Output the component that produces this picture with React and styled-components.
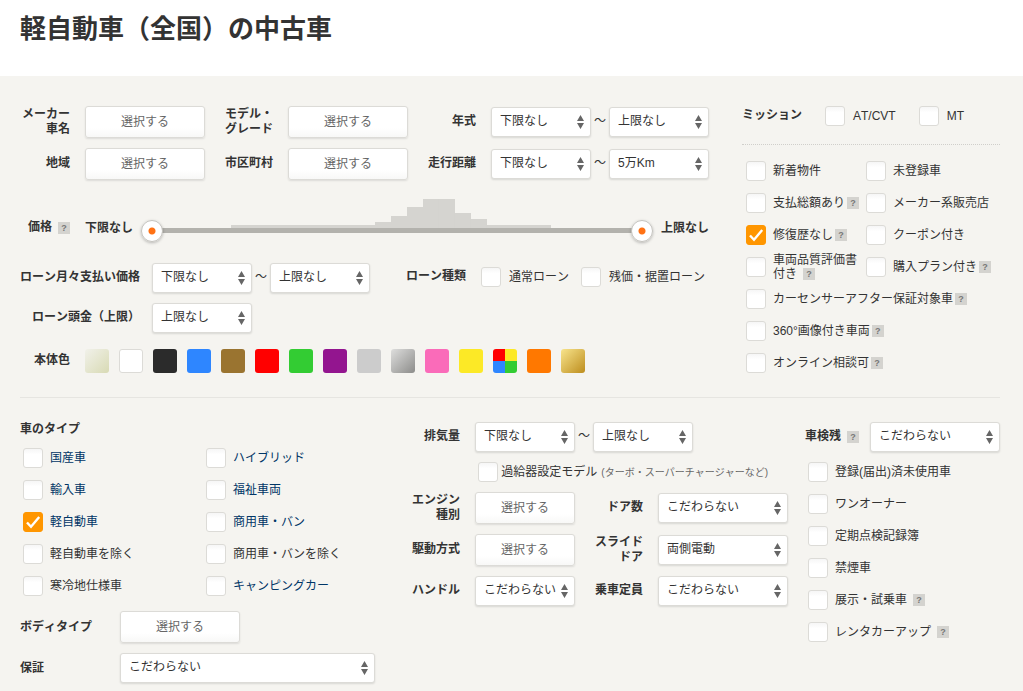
import React from 'react'
import styled, { createGlobalStyle } from 'styled-components'

const App = () => (
  <>
    <GlobalStyle />
    <Header>
      <Title>軽自動車（全国）の中古車</Title>
    </Header>
    <Panel>
      <TopSection>
        <div>
          <BasicGrid>
            <Label htmlFor='maker'>メーカー<br />車名</Label>
            <Button id='maker' type='button'>選択する</Button>
            <Label htmlFor='model'>モデル・<br />グレード</Label>
            <Button id='model' type='button'>選択する</Button>
            <Label htmlFor='year'>年式</Label>
            <Range id='year' name='年式' from='下限なし' to='上限なし' />
            <Label htmlFor='area'>地域</Label>
            <Button id='area' type='button'>選択する</Button>
            <Label htmlFor='city'>市区町村</Label>
            <Button id='city' type='button'>選択する</Button>
            <Label htmlFor='mileage'>走行距離</Label>
            <Range id='mileage' name='走行距離' from='下限なし' to='5万Km' />
          </BasicGrid>
          <PriceSlider />
          <LoanGrid>
            <Label htmlFor='loan'>ローン月々支払い価格</Label>
            <Range id='loan' name='ローン月々支払い価格' from='下限なし' to='上限なし' />
            <LoanTypes>
              <Label as='span'>ローン種類</Label>
              <Check gap='8px' text='通常ローン' />
              <Check gap='8px' text='残価・据置ローン' />
            </LoanTypes>
            <Label htmlFor='deposit'>ローン頭金（上限）</Label>
            <Select id='deposit' width='100px' value='上限なし' />
          </LoanGrid>
          <ColorRow>
            <Label as='span'>本体色</Label>
            <Swatches>
              {colors.map(c => (
                <Swatch key={c.name} type='checkbox' aria-label={c.name} $fill={c.fill} $outlined={c.outlined} />
              ))}
            </Swatches>
          </ColorRow>
        </div>
        <div>
          <Mission>
            <Label as='span'>ミッション</Label>
            <Check gap='8px' text='AT/CVT' />
            <Check gap='8px' text='MT' />
          </Mission>
          <OptionGrid>
            {options.map(o => <Check key={o.text} {...o} />)}
          </OptionGrid>
        </div>
      </TopSection>

      <BottomSection>
        <div>
          <Heading>車のタイプ</Heading>
          <TypeGrid>
            {carTypes.map(t => <Check key={t.text} {...t} />)}
          </TypeGrid>
          <BodyGrid>
            <Label $left htmlFor='body'>ボディタイプ</Label>
            <Button id='body' type='button'>選択する</Button>
            <Label $left htmlFor='warranty'>保証</Label>
            <Select id='warranty' width='100%' value='こだわらない' />
          </BodyGrid>
        </div>
        <div>
          <SpecGrid>
            <Label htmlFor='engine-size'>排気量</Label>
            <Wide>
              <Range id='engine-size' name='排気量' from='下限なし' to='上限なし' />
            </Wide>
          </SpecGrid>
          <TurboRow>
            <Check gap='3px' text='過給器設定モデル' note='(ターボ・スーパーチャージャーなど)' />
          </TurboRow>
          <SpecGrid>
            <Label htmlFor='engine'>エンジン<br />種別</Label>
            <Button id='engine' type='button'>選択する</Button>
            <Label htmlFor='doors'>ドア数</Label>
            <Select id='doors' width='100%' value='こだわらない' />
            <Label htmlFor='drive'>駆動方式</Label>
            <Button id='drive' type='button'>選択する</Button>
            <Label htmlFor='slide'>スライド<br />ドア</Label>
            <Select id='slide' width='100%' value='両側電動' />
            <Label htmlFor='handle'>ハンドル</Label>
            <Select id='handle' width='100%' value='こだわらない' />
            <Label htmlFor='seats'>乗車定員</Label>
            <Select id='seats' width='100%' value='こだわらない' />
          </SpecGrid>
        </div>
        <div>
          <Inspection>
            <Label htmlFor='inspection'>車検残</Label>
            <Help />
            <Select id='inspection' width='130px' value='こだわらない' />
          </Inspection>
          <ConditionList>
            {conditions.map(c => <Check key={c.text} {...c} />)}
          </ConditionList>
        </div>
      </BottomSection>
    </Panel>
  </>
)

const options = [
  { text: '新着物件' },
  { text: '未登録車' },
  { text: '支払総額あり', help: true },
  { text: 'メーカー系販売店' },
  { text: '修復歴なし', help: true, checked: true },
  { text: 'クーポン付き' },
  { text: '車両品質評価書付き', help: true, spaced: true },
  { text: '購入プラン付き', help: true },
  { text: 'カーセンサーアフター保証対象車', help: true, full: true },
  { text: '360°画像付き車両', help: true, full: true },
  { text: 'オンライン相談可', help: true, full: true }
]

const carTypes = [
  { text: '国産車', href: '#domestic' },
  { text: 'ハイブリッド', href: '#hybrid' },
  { text: '輸入車', href: '#import' },
  { text: '福祉車両', href: '#welfare' },
  { text: '軽自動車', href: '#kei', checked: true },
  { text: '商用車・バン', href: '#van' },
  { text: '軽自動車を除く' },
  { text: '商用車・バンを除く' },
  { text: '寒冷地仕様車' },
  { text: 'キャンピングカー', href: '#camper' }
]

const conditions = [
  { text: '登録(届出)済未使用車' },
  { text: 'ワンオーナー' },
  { text: '定期点検記録簿' },
  { text: '禁煙車' },
  { text: '展示・試乗車', help: true, spaced: true },
  { text: 'レンタカーアップ', help: true, spaced: true }
]

const colors = [
  { name: 'パール', fill: 'linear-gradient(135deg, #f1f1ea, #d8dab4)' },
  { name: 'ホワイト', fill: '#fff', outlined: true },
  { name: 'ブラック', fill: '#2b2b2b' },
  { name: 'ブルー', fill: '#2e86ff' },
  { name: 'ブラウン', fill: '#9a7430' },
  { name: 'レッド', fill: '#ff0000' },
  { name: 'グリーン', fill: '#33cc33' },
  { name: 'パープル', fill: '#93158f' },
  { name: 'シルバー', fill: '#ccc' },
  { name: 'ガンメタ', fill: 'linear-gradient(135deg, #dededd, #8c8c8a)' },
  { name: 'ピンク', fill: '#fa6bb9' },
  { name: 'イエロー', fill: '#fce926' },
  { name: 'その他', fill: 'conic-gradient(#fce926 25%, #33cc33 0 50%, #2e86ff 0 75%, #ff0000 0)' },
  { name: 'オレンジ', fill: '#ff7800' },
  { name: 'ゴールド', fill: 'linear-gradient(135deg, #f8e48c, #bd8d1d)' }
]

// number of cars per price band, first band is the cheapest
const bands = [0, 0, 0, 0, 0, 3, 3, 3, 3, 3, 3, 3, 3, 3, 6, 12, 21, 29, 29, 15, 9, 3, 3, 3, 3, 0, 0, 0, 0, 0, 0]

const Help = () => <HelpButton type='button' aria-label='ヘルプ'>?</HelpButton>

const Check = ({ text, note, href, help, spaced, checked, full, gap = '7px' }) => (
  <CheckItem $full={full}>
    <CheckLabel $gap={gap}>
      <Box>
        <BoxInput type='checkbox' defaultChecked={checked} />
        <Tick viewBox='0 0 20 20'>
          <path d='M4 10.5 L8 14.8 L16.2 5' />
        </Tick>
      </Box>
      <CheckText>
        {href ? <TypeLink href={href}>{text}</TypeLink> : text}
        {note && <Note>{note}</Note>}
        {help && <HelpSlot $spaced={spaced}><Help /></HelpSlot>}
      </CheckText>
    </CheckLabel>
  </CheckItem>
)

const Select = ({ id, name, value, width }) => (
  <SelectWrap $width={width}>
    <SelectInput id={id} aria-label={name} defaultValue={value}>
      <option>{value}</option>
    </SelectInput>
    <Arrows viewBox='0 0 7 14'>
      <path d='M3.5 0 L7 6 H0 Z M0 8 H7 L3.5 14 Z' />
    </Arrows>
  </SelectWrap>
)

const Range = ({ id, name, from, to }) => (
  <RangeRow>
    <Select id={id} width='100px' value={from} />
    <Tilde>～</Tilde>
    <Select name={`${name} 上限`} width='100px' value={to} />
  </RangeRow>
)

const PriceSlider = () => (
  <PriceRow>
    <PriceLabel>
      <Label as='span'>価格</Label>
      <Help />
    </PriceLabel>
    <Bound>下限なし</Bound>
    <Slider>
      <Histogram viewBox='0 0 496 29' preserveAspectRatio='none'>
        {bands.map((h, i) => h > 0 && <rect key={i} x={i * 16} y={29 - h} width='16' height={h} />)}
      </Histogram>
      <Track />
      <Thumb type='range' aria-label='価格 下限' min='0' max='100' defaultValue='0' />
      <Thumb type='range' aria-label='価格 上限' min='0' max='100' defaultValue='100' />
    </Slider>
    <Bound>上限なし</Bound>
  </PriceRow>
)

const GlobalStyle = createGlobalStyle`
  * {
    box-sizing: border-box;
  }
  body {
    margin: 0;
    background: #fff;
    color: #333;
    font-family: "Liberation Sans", "Noto Sans CJK JP", sans-serif;
    font-size: 12px;
    font-kerning: none;
    line-height: 15px;
  }
  button, input, select {
    margin: 0;
    font: inherit;
  }
`
const Header = styled.header`
  padding: 11px 20px 29px;
`
const Title = styled.h1`
  margin: 0;
  font-size: 26px;
  line-height: 36px;
`
const Panel = styled.main`
  padding: 30px 23px 8px 20px;
  background: #f5f4f0;
`
const TopSection = styled.section`
  display: grid;
  grid-template-columns: 1fr 258px;
  gap: 33px;
  padding-bottom: 18px;
  border-bottom: 1px solid #e6e5e1;
`
const BottomSection = styled.section`
  display: grid;
  grid-template-columns: 355px 1fr 195px;
  gap: 17px;
  padding-top: 24px;
`
const Label = styled.label`
  padding-bottom: ${props => props.$left ? '0' : '1px'};
  font-weight: bold;
  text-align: ${props => props.$left ? 'left' : 'right'};
  white-space: nowrap;
`
const BasicGrid = styled.div`
  display: grid;
  grid-template-columns: 50px 120px 53px 120px 1fr 218px;
  gap: 10px 15px;
  align-items: center;
`
const Button = styled.button`
  height: 32px;
  padding: 0;
  border: 1px solid #dcdbd7;
  border-radius: 3px;
  background: linear-gradient(#fff 70%, #f8f8f7);
  box-shadow: 0 1px 2px rgba(0, 0, 0, 0.1);
  color: #666;
  cursor: pointer;
`
const RangeRow = styled.div`
  display: flex;
  align-items: center;
`
const Tilde = styled.span`
  width: 18px;
  padding-bottom: 1px;
  text-align: center;
`
const SelectWrap = styled.span`
  display: grid;
  align-items: center;
  width: ${props => props.$width};
`
const SelectInput = styled.select`
  grid-area: 1 / 1;
  width: 100%;
  height: 30px;
  padding: 0 16px 1px 8px;
  appearance: none;
  border: 1px solid #dcdbd7;
  border-radius: 3px;
  background: #fff;
  box-shadow: 0 1px 2px rgba(0, 0, 0, 0.12);
  color: #333;
`
const Arrows = styled.svg`
  grid-area: 1 / 1;
  justify-self: end;
  width: 7px;
  height: 14px;
  margin-right: 7px;
  fill: #666;
  pointer-events: none;
`
const HelpButton = styled.button`
  width: 12px;
  height: 12px;
  padding: 0;
  border: 0;
  background: #d4d3cf;
  color: #777;
  font-size: 9px;
  font-weight: bold;
  line-height: 12px;
  vertical-align: 1px;
`
const HelpSlot = styled.span`
  margin-left: ${props => props.$spaced ? '6px' : '2px'};
`
const PriceRow = styled.div`
  display: flex;
  align-items: center;
  gap: 8px;
  margin-top: 19px;
`
const PriceLabel = styled.div`
  display: flex;
  align-items: center;
  justify-content: flex-end;
  gap: 6px;
  width: 50px;
  margin-right: 7px;
  padding-top: 15px;
`
const Bound = styled.span`
  padding-top: 15px;
  font-weight: bold;
`
const Slider = styled.div`
  display: grid;
  flex: 1;
  align-items: start;
  height: 43px;
`
const Histogram = styled.svg`
  grid-area: 1 / 1;
  width: calc(100% - 16px);
  height: 29px;
  margin: 0 8px 0 10px;
  fill: #d5d4d0;
`
const Track = styled.div`
  grid-area: 1 / 1;
  height: 5px;
  margin: 29px 11px 0;
  background: #b3b2ad;
`
const Thumb = styled.input`
  grid-area: 1 / 1;
  width: 100%;
  height: 22px;
  margin: 21px 0 0;
  appearance: none;
  background: transparent;
  pointer-events: none;
  &::-webkit-slider-thumb {
    width: 22px;
    height: 22px;
    appearance: none;
    border: 1px solid #c4c3be;
    border-radius: 50%;
    background: radial-gradient(circle, #ff7214 3px, #fff 4px);
    box-shadow: 0 1px 3px rgba(0, 0, 0, 0.25);
    pointer-events: auto;
  }
`
const LoanGrid = styled.div`
  display: grid;
  grid-template-columns: 120px 218px 1fr;
  gap: 10px 12px;
  align-items: center;
  margin-top: 21px;
`
const LoanTypes = styled.div`
  display: flex;
  align-items: center;
  gap: 12px;
  padding: 0 0 2px 24px;
  ${Label} {
    margin-right: 3px;
  }
`
const ColorRow = styled.div`
  display: grid;
  grid-template-columns: 50px 1fr;
  gap: 15px;
  align-items: center;
  margin-top: 16px;
`
const Swatches = styled.div`
  display: flex;
  gap: 10px;
`
const Swatch = styled.input`
  width: 24px;
  height: 24px;
  appearance: none;
  border: ${props => props.$outlined ? '1px solid #dcdbd7' : '0'};
  border-radius: 3px;
  background: ${props => props.$fill};
`
const CheckItem = styled.div`
  display: flex;
  align-items: center;
  grid-column: ${props => props.$full ? '1 / -1' : 'auto'};
`
const CheckLabel = styled.label`
  display: flex;
  align-items: center;
  gap: ${props => props.$gap};
`
const Box = styled.span`
  display: grid;
  flex: none;
  width: 20px;
  height: 20px;
`
const Tick = styled.svg`
  display: none;
  grid-area: 1 / 1;
  width: 20px;
  height: 20px;
  fill: none;
  stroke: #fff;
  stroke-width: 2.4;
  pointer-events: none;
`
const BoxInput = styled.input`
  grid-area: 1 / 1;
  width: 20px;
  height: 20px;
  appearance: none;
  border: 1px solid #dcdbd7;
  border-radius: 3px;
  background: linear-gradient(#f6f6f6, #fff 30%);
  &:checked {
    border-color: #ff9600;
    background: #ff9600;
  }
  &:checked + ${Tick} {
    display: block;
  }
`
const CheckText = styled.span`
  line-height: 14px;
`
const TypeLink = styled.a`
  color: #003566;
  text-decoration: none;
`
const Note = styled.small`
  margin-left: 4px;
  color: #666;
  font-size: 10px;
`
const Mission = styled.div`
  display: flex;
  align-items: center;
  gap: 23px;
  padding-bottom: 18px;
  border-bottom: 1px dotted #d0cfcb;
`
const OptionGrid = styled.div`
  display: grid;
  grid-template-columns: 120px 1fr;
  grid-auto-rows: 32px;
  padding: 10px 0 0 4px;
`
const Heading = styled.h2`
  margin: 0 0 6px;
  font-size: 12px;
  line-height: 14px;
`
const TypeGrid = styled.div`
  display: grid;
  grid-template-columns: 183px 1fr;
  grid-auto-rows: 32px;
  padding-left: 3px;
`
const BodyGrid = styled.div`
  display: grid;
  grid-template-columns: 100px 1fr;
  gap: 10px 0;
  align-items: center;
  margin-top: 9px;
  ${Button} {
    width: 120px;
  }
`
const SpecGrid = styled.div`
  display: grid;
  grid-template-columns: 68px 100px 53px 130px;
  gap: 10px 15px;
  align-items: center;
  justify-content: end;
`
const Wide = styled.div`
  grid-column: 2 / -1;
`
const TurboRow = styled.div`
  display: flex;
  justify-content: flex-end;
  height: 40px;
  padding-right: 20px;
  white-space: nowrap;
`
const Inspection = styled.div`
  display: flex;
  align-items: center;
  gap: 6px;
  margin-bottom: 4px;
  ${SelectWrap} {
    margin-left: auto;
  }
`
const ConditionList = styled.div`
  display: grid;
  grid-auto-rows: 32px;
  padding-left: 3px;
`

export default App
